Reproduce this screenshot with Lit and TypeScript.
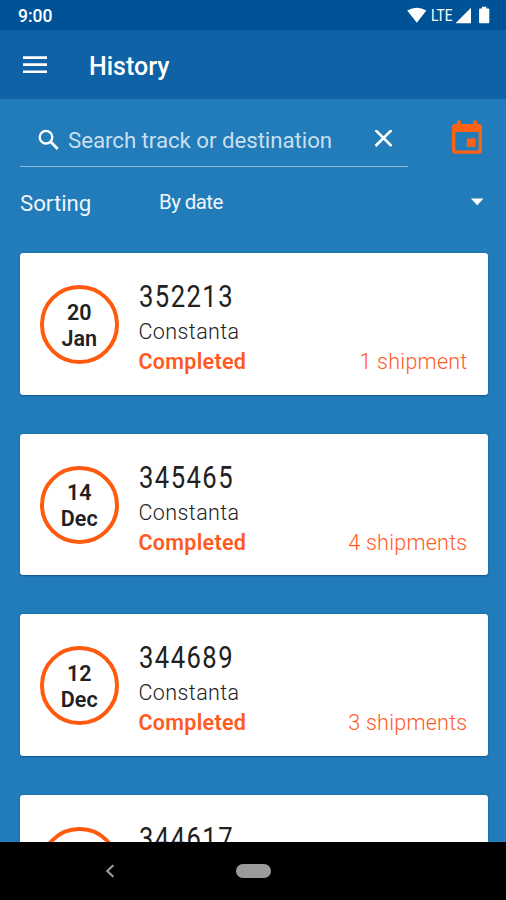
import { LitElement, html, css, nothing } from "lit";
import { customElement, property } from "lit/decorators.js";

interface Track {
  code: string;
  date?: [string, string];
  place?: string;
  status?: string;
  count?: string;
}

const TRACKS: Track[] = [
  { date: ["20", "Jan"], code: "352213", place: "Constanta", status: "Completed", count: "1 shipment" },
  { date: ["14", "Dec"], code: "345465", place: "Constanta", status: "Completed", count: "4 shipments" },
  { date: ["12", "Dec"], code: "344689", place: "Constanta", status: "Completed", count: "3 shipments" },
  { code: "344617" },
];

@customElement("track-card")
export class TrackCard extends LitElement {
  @property({ attribute: false }) track!: Track;

  static styles = css`
    :host {
      display: flex;
      flex: none;
      box-sizing: border-box;
      height: 141.5px;
      padding: 32px 20px 0;
      background: #fff;
      border-radius: 3px;
      box-shadow: 0 0.5px 1.5px rgba(0, 50, 110, 0.5);
      color: #212121;
    }
    .date {
      flex: none;
      box-sizing: border-box;
      width: 78.5px;
      height: 78.5px;
      padding-top: 10.5px;
      border: 4.5px solid #ff5a0e;
      border-radius: 50%;
      text-align: center;
      font-size: 21.5px;
      font-weight: 600;
      line-height: 26px;
    }
    .info {
      flex: 1;
      margin: -6px 0 0 20px;
    }
    .code {
      width: max-content;
      font-size: 32px;
      font-weight: 400;
      line-height: 34px;
      letter-spacing: 1.8px;
      transform: scaleX(0.8);
      transform-origin: left;
    }
    .place {
      margin-top: 4px;
      font-size: 21.5px;
      font-weight: 330;
      line-height: 30px;
      letter-spacing: 0.4px;
    }
    .row {
      display: flex;
      justify-content: space-between;
      color: #ff5a1f;
      font-size: 21.5px;
      line-height: 30px;
    }
    .status {
      font-weight: 600;
      letter-spacing: 0.3px;
    }
    .count {
      font-weight: 340;
      letter-spacing: 0.25px;
    }
  `;

  render() {
    const t = this.track;
    return html`
      <div class="date">${t.date ? t.date.map((part) => html`<div>${part}</div>`) : nothing}</div>
      <div class="info">
        <div class="code">${t.code}</div>
        ${t.place ? html`<div class="place">${t.place}</div>` : nothing}
        ${t.status
          ? html`<div class="row"><span class="status">${t.status}</span><span class="count">${t.count}</span></div>`
          : nothing}
      </div>
    `;
  }
}

@customElement("app-root")
export class AppRoot extends LitElement {
  static styles = css`
    :host {
      display: flex;
      flex-direction: column;
      height: 900px;
      overflow: hidden;
      background: #217cb9;
      color: #fff;
      font-family: Roboto, sans-serif;
    }
    svg {
      display: block;
      flex: none;
    }
    .system {
      display: flex;
      flex: none;
      align-items: center;
      box-sizing: border-box;
      height: 30px;
      padding: 2px 14px 0 18px;
      background: #005297;
    }
    .time {
      flex: 1;
      font-size: 17.5px;
      font-weight: 500;
      line-height: 20px;
    }
    .bar {
      display: flex;
      flex: none;
      align-items: center;
      box-sizing: border-box;
      height: 68.5px;
      padding: 2px 0 0 23px;
      background: #0f62a5;
    }
    .title {
      margin: 3px 0 0 42px;
      font-size: 25px;
      font-weight: 500;
      line-height: 30px;
    }
    .tools {
      display: flex;
      flex: none;
      height: 68.5px;
      padding: 0 22px 0 20px;
    }
    .search {
      display: flex;
      flex: none;
      align-items: center;
      box-sizing: border-box;
      width: 388px;
      height: 68.5px;
      padding: 16px 14px 0 17px;
      border-bottom: 1.5px solid #90bddc;
    }
    .hint {
      flex: 1;
      margin-left: 7px;
      color: #c9dfee;
      font-size: 22.3px;
      line-height: 28px;
      letter-spacing: -0.06px;
      white-space: nowrap;
    }
    .calendar {
      margin: 20px 0 0 43px;
    }
    .sorting {
      display: flex;
      flex: none;
      align-items: center;
      height: 72px;
      padding: 0 22px 0 20px;
    }
    .label {
      width: 139px;
      font-size: 22.2px;
      line-height: 28px;
      color: #eef6fb;
    }
    .value {
      flex: 1;
      margin-top: -2px;
      font-size: 20.5px;
      line-height: 26px;
      letter-spacing: -0.6px;
      color: #eef6fb;
    }
    .arrow {
      margin-top: -2px;
    }
    .list {
      display: flex;
      flex: 1;
      min-height: 0;
      flex-direction: column;
      gap: 39px;
      padding: 14px 18.5px 0 20px;
      overflow: hidden;
    }
    .nav {
      display: flex;
      flex: none;
      align-items: center;
      height: 58px;
      background: #000;
    }
    .back {
      margin-left: 105px;
    }
    .home {
      width: 35px;
      height: 13.5px;
      margin-left: 121px;
      border-radius: 7px;
      background: #9b9b9b;
    }
  `;

  render() {
    return html`
      <div class="system">
        <span class="time">9:00</span>
        <svg width="86" height="20" viewBox="0 0 86 20" fill="#fff">
          <path d="M1.2 4.600Q10.800 -1.200 20.400 4.600L10.800 16.700Z" />
          <text x="25" y="15" font-size="16" textLength="21.5" lengthAdjust="spacingAndGlyphs">LTE</text>
          <path d="M65 1.800V17.200H49.500Z" />
          <path d="M74 2.600h2V.8h4.400v1.800h2q.9 0 .9.9v12.800q0 .9-.9.9H74q-.9 0-.9-.9V3.500q0-.9.9-.9Z" />
        </svg>
      </div>
      <div class="bar">
        <svg width="24" height="18" viewBox="0 0 24 18" fill="#fff">
          <path d="M0 .2h24v2.700H0zM0 7.300h24v2.700H0zM0 14.400h24v2.700H0z" />
        </svg>
        <span class="title">History</span>
      </div>
      <div class="tools">
        <div class="search">
          <svg width="24" height="24" viewBox="0 0 24 24" fill="none" stroke="#fff">
            <circle cx="9" cy="9.200" r="6.300" stroke-width="2.300" />
            <path d="M13.600 13.800L20.700 20.900" stroke-width="2.800" />
          </svg>
          <span class="hint">Search track or destination</span>
          <svg width="20" height="20" viewBox="0 0 20 20" fill="none" stroke="#fff" stroke-width="2.500">
            <path d="M1.500 0L17.500 16M17.500 0L1.500 16" />
          </svg>
        </div>
        <svg class="calendar" width="32" height="36" viewBox="0 0 32 36" fill="#ff6213">
          <path fill-rule="evenodd" d="M6 1.500h3.800V5h12.400V1.500H26V5h1.800Q31 5 31 8v23.500Q31 34.800 27.800 34.800H4.200Q1 34.800 1 31.500V8Q1 5 4.200 5H6ZM4.400 13v18.400h23.200V13Z" />
          <path d="M15.800 19.400h8.800v8.400h-8.800z" />
        </svg>
      </div>
      <div class="sorting">
        <span class="label">Sorting</span>
        <span class="value">By date</span>
        <svg class="arrow" width="14" height="8" viewBox="0 0 14 8" fill="#fff"><path d="M.9 .5h12.600L7.200 7.300Z" /></svg>
      </div>
      <div class="list">${TRACKS.map((t) => html`<track-card .track=${t}></track-card>`)}</div>
      <div class="nav">
        <svg class="back" width="10" height="14" viewBox="0 0 10 14" fill="none" stroke="#9b9b9b" stroke-width="2.200">
          <path d="M8.300 1.200L2.300 7L8.300 12.800" />
        </svg>
        <div class="home"></div>
      </div>
    `;
  }
}
